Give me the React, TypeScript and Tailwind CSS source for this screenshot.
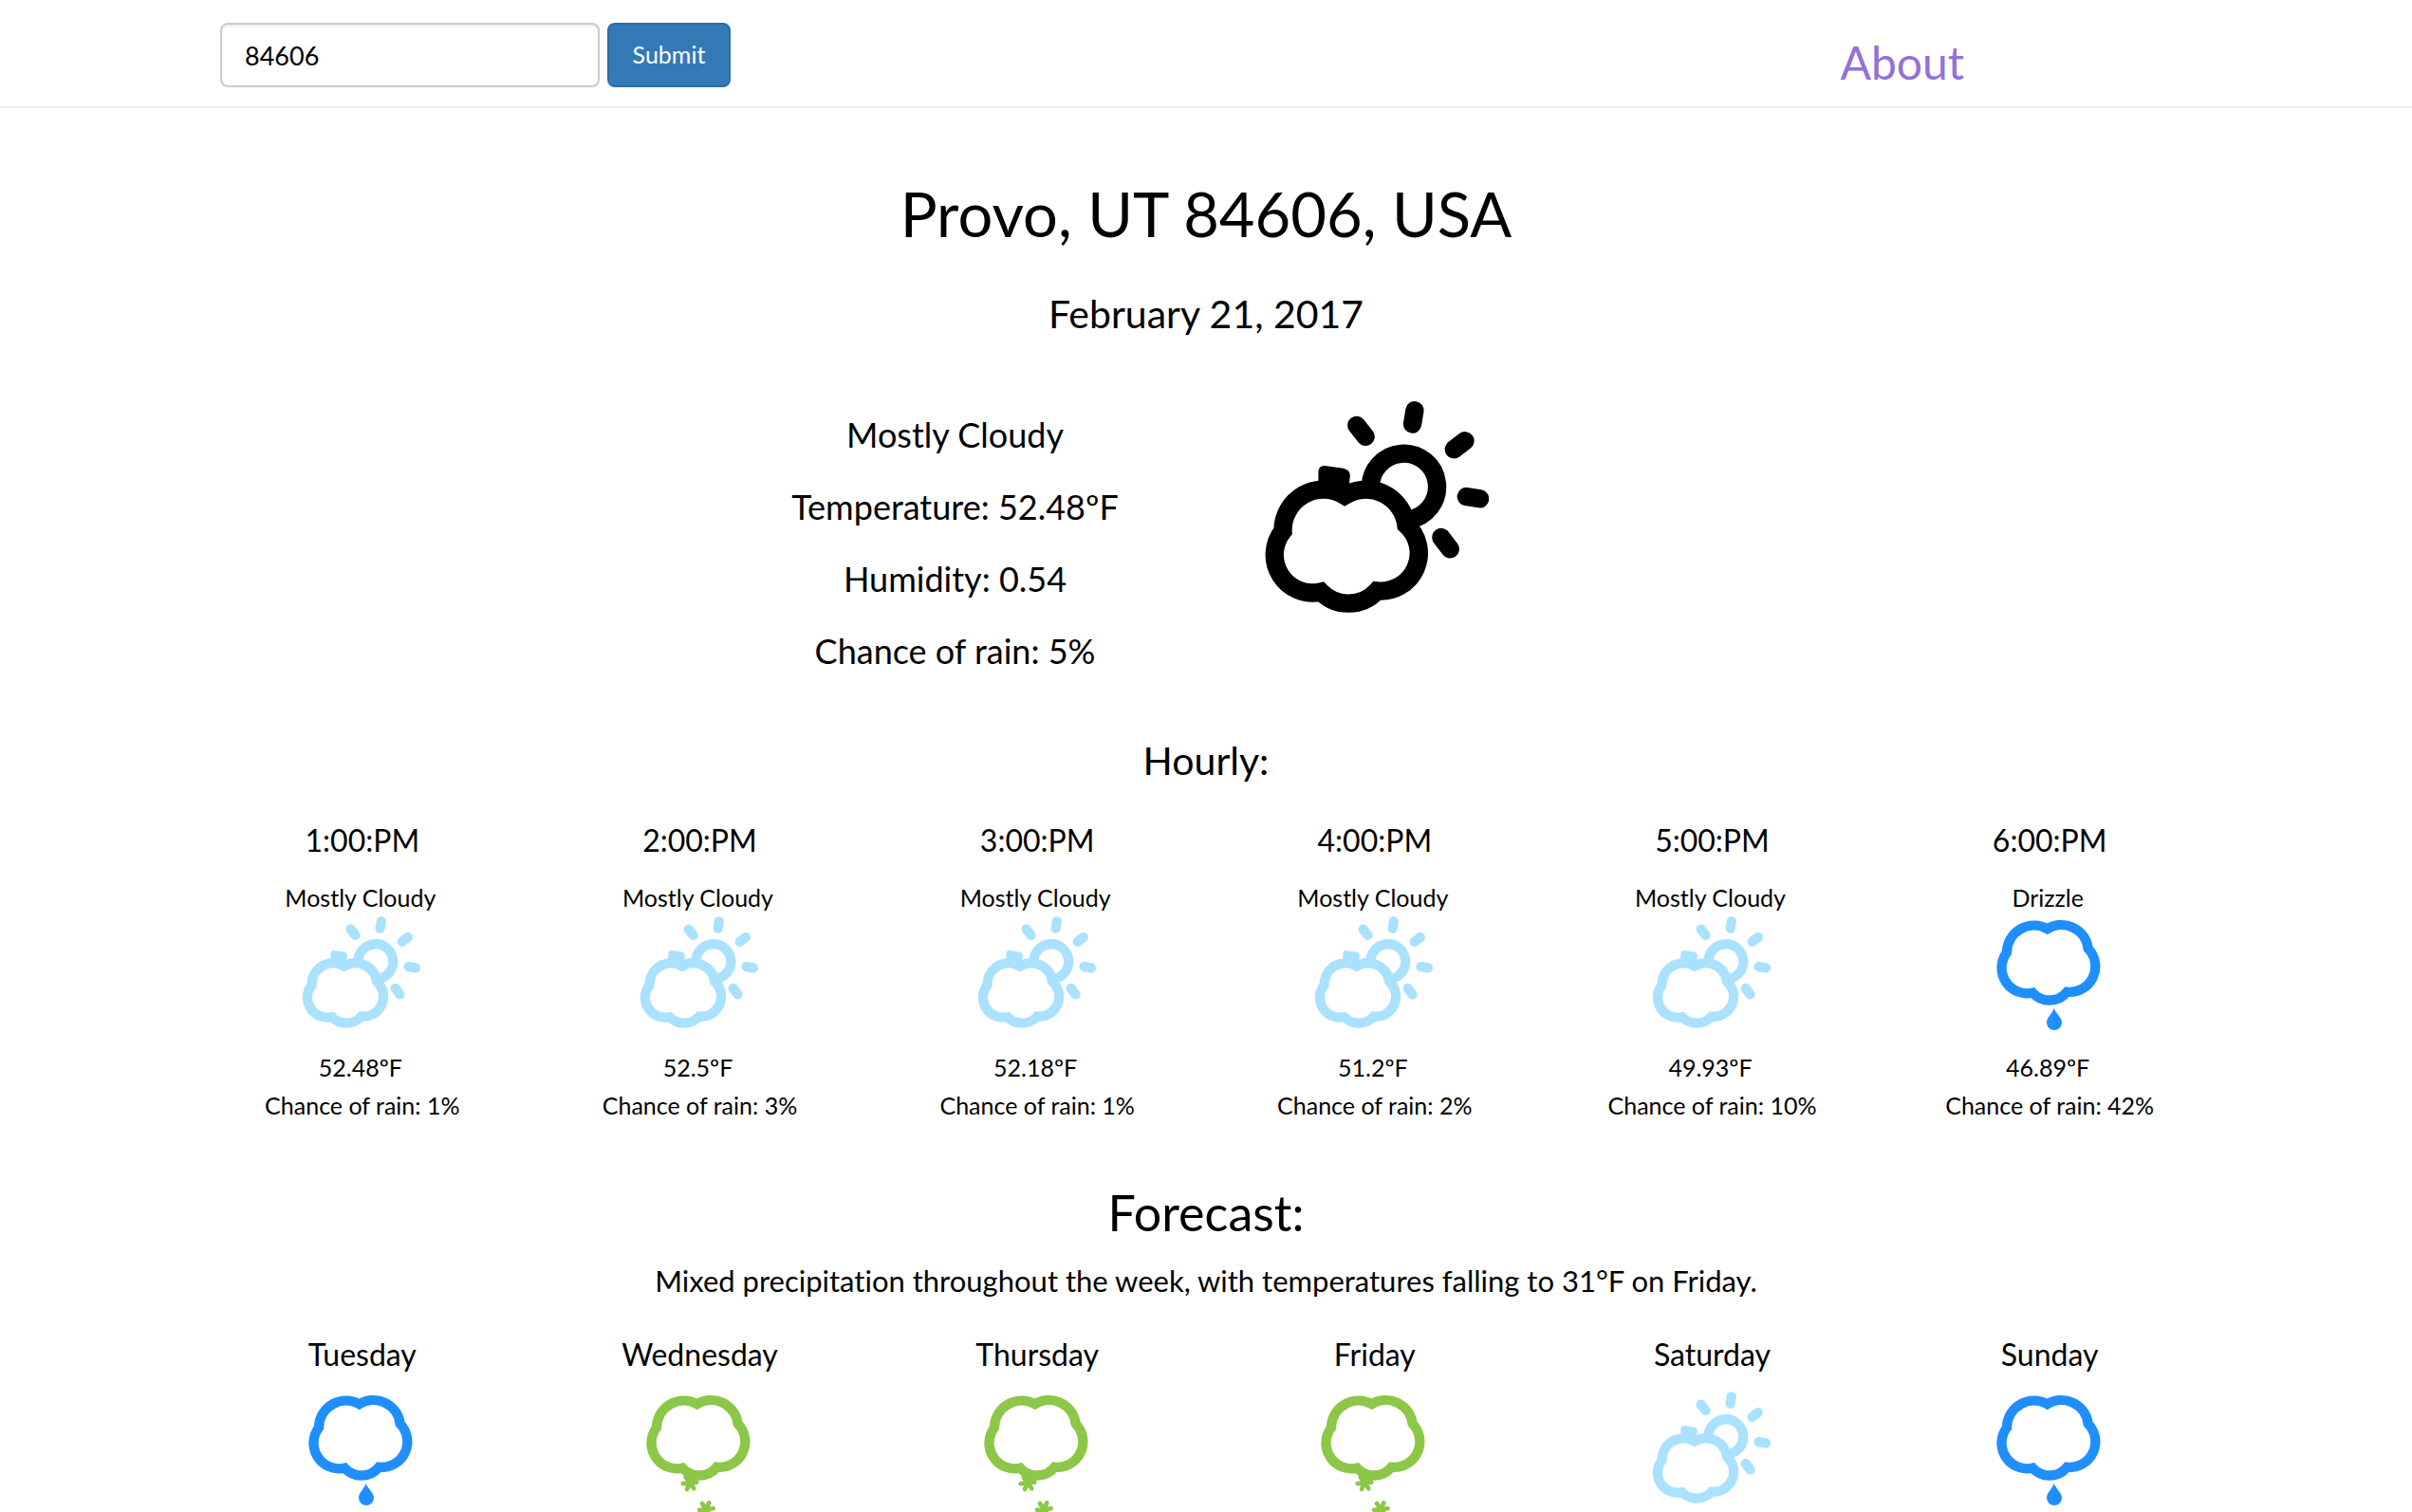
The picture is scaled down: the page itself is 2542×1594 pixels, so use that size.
type Condition = "cloudy" | "drizzle" | "snow";

const hours: { time: string; summary: string; icon: Condition; temp: string; rain: number }[] = [
  { time: "1:00:PM", summary: "Mostly Cloudy", icon: "cloudy", temp: "52.48", rain: 1 },
  { time: "2:00:PM", summary: "Mostly Cloudy", icon: "cloudy", temp: "52.5", rain: 3 },
  { time: "3:00:PM", summary: "Mostly Cloudy", icon: "cloudy", temp: "52.18", rain: 1 },
  { time: "4:00:PM", summary: "Mostly Cloudy", icon: "cloudy", temp: "51.2", rain: 2 },
  { time: "5:00:PM", summary: "Mostly Cloudy", icon: "cloudy", temp: "49.93", rain: 10 },
  { time: "6:00:PM", summary: "Drizzle", icon: "drizzle", temp: "46.89", rain: 42 },
];

const days: { name: string; icon: Condition }[] = [
  { name: "Tuesday", icon: "drizzle" },
  { name: "Wednesday", icon: "snow" },
  { name: "Thursday", icon: "snow" },
  { name: "Friday", icon: "snow" },
  { name: "Saturday", icon: "cloudy" },
  { name: "Sunday", icon: "drizzle" },
];

function PartlyCloudy({ className }: { className: string }) {
  return (
    <svg viewBox="70 70 710 680" className={className} fill="none" stroke="currentColor" strokeWidth="58" aria-hidden="true">
      <path d="M130 480A128 128 0 0 1 325 368A128 128 0 0 1 519 460A120 120 0 0 1 427 669A122 122 0 0 1 250 672A120 120 0 0 1 130 480Z" />
      <path d="M407 345A105 105 0 1 1 528 444" />
      <path
        d="M262 274L322 282Q342 287 342 306L338 345H242V292Q244 273 262 274Z"
        fill="currentColor"
        stroke="none"
      />
      <path
        strokeLinecap="round"
        d="M546 99L539 142M363 146L391 182M705 195L670 222M709 371L752 378M630 500L658 537"
      />
    </svg>
  );
}

function Flake({ x, y }: { x: number; y: number }) {
  return (
    <path
      transform={`translate(${x} ${y}) rotate(-6)`}
      strokeWidth="14"
      strokeLinecap="round"
      d="M-22 0H22M-11 -19L11 19M11 -19L-11 19"
    />
  );
}

function RainCloud({ snow, className }: { snow?: boolean; className: string }) {
  return (
    <svg
      viewBox="289 348 375 360"
      className={className}
      fill="none"
      stroke="currentColor"
      strokeWidth="31"
      aria-hidden="true"
    >
      <path d="M343 462A86 86 0 0 1 471 388A85 85 0 0 1 600 450A81 81 0 0 1 533 587A71 71 0 0 1 425 590A81 81 0 0 1 343 462Z" />
      {snow ? (
        <>
          <path stroke="none" fill="currentColor" d="M424 592L432 622L470 632L486 612Z" />
          <Flake x={448} y={637} />
          <Flake x={500} y={720} />
          <Flake x={448} y={803} />
        </>
      ) : (
        <path
          stroke="none"
          fill="currentColor"
          d="M492 638C497 655 517 667 517 684A24 24 0 0 1 469 684C469 667 488 655 492 638Z"
        />
      )}
    </svg>
  );
}

function WeatherIcon({ icon }: { icon: Condition }) {
  if (icon === "cloudy") return <PartlyCloudy className="mr-0.5 h-[120px] w-[125px] text-[#aae1ff]" />;
  if (icon === "drizzle") return <RainCloud className="mr-0.5 h-[120px] w-[125px] text-[#1f8fff]" />;
  return <RainCloud snow className="mr-0.5 h-[120px] w-[125px] overflow-visible text-[#8cc748]" />;
}

export default function App() {
  return (
    <div className="min-h-screen overflow-hidden bg-white pb-[7px] text-center font-['Lato',sans-serif] text-black [font-variant-ligatures:none]">
      <header className="flex items-start justify-between border-b-2 border-[#eee] px-[232px] pt-6 pb-3.5">
        <form className="flex gap-2" onSubmit={(e) => e.preventDefault()}>
          <input
            type="text"
            aria-label="Zip code"
            defaultValue="84606"
            className="h-[68px] w-[400px] rounded-lg border-2 border-[#ccc] bg-white px-6 text-[27px] shadow-[inset_0_2px_2px_rgba(0,0,0,0.075)] outline-none"
          />
          <button
            type="submit"
            className="h-[68px] w-[130px] rounded-lg border-2 border-[#2e6da4] bg-[#337ab7] text-[25px] text-white"
          >
            Submit
          </button>
        </form>
        <a href="#about" className="mt-2.5 mr-60 text-[48px] leading-[64px] text-[#9370db]">
          About
        </a>
      </header>

      <main className="px-51">
        <h1 className="mt-[71px] text-[65px] leading-[80px]">Provo, UT 84606, USA</h1>
        <h2 className="mt-[42px] text-[41px] leading-[48px]">February 21, 2017</h2>

        <section className="mx-auto mt-[65px] flex w-[874px] gap-[153px]">
          <div className="w-[345px] text-[36px] leading-[76px]">
            <p>Mostly Cloudy</p>
            <p>Temperature: 52.48ºF</p>
            <p>Humidity: 0.54</p>
            <p>Chance of rain: 5%</p>
          </div>
          <PartlyCloudy className="mt-[3px] h-[227px] w-[237px]" />
        </section>

        <section>
          <h2 className="mt-[54px] text-[41px] leading-[48px]">Hourly:</h2>
          <ul className="mt-10 grid grid-cols-6">
            {hours.map((h) => (
              <li key={h.time} className="flex flex-col items-center text-[25px] leading-[40px]">
                <h3 className="text-[32px]">{h.time}</h3>
                <p className="mt-5 pr-1">{h.summary}</p>
                <WeatherIcon icon={h.icon} />
                <p className="mt-[19px] pr-1">{h.temp}ºF</p>
                <p>Chance of rain: {h.rain}%</p>
              </li>
            ))}
          </ul>
        </section>

        <section>
          <h2 className="mt-[61px] text-[52px] leading-[64px]">Forecast:</h2>
          <p className="mt-5 text-[31px] leading-[40px]">
            Mixed precipitation throughout the week, with temperatures falling to 31°F on Friday.
          </p>
          <ul className="mt-[38px] grid grid-cols-6">
            {days.map((d) => (
              <li key={d.name} className="flex flex-col items-center">
                <h3 className="mb-[19px] text-[32px] leading-[40px]">{d.name}</h3>
                <WeatherIcon icon={d.icon} />
              </li>
            ))}
          </ul>
        </section>
      </main>
    </div>
  );
}
